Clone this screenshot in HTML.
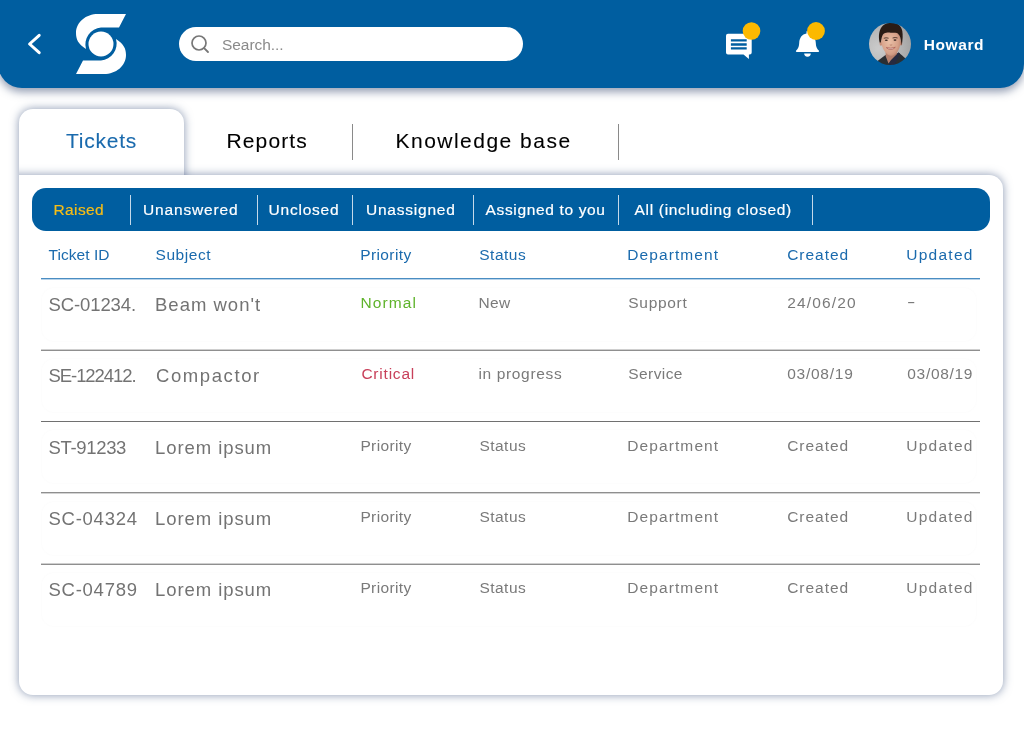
<!DOCTYPE html>
<html lang="en">
<head>
<meta charset="utf-8">
<title>Tickets</title>
<style>
*{box-sizing:border-box;margin:0;padding:0}
html,body{width:1024px;height:730px;overflow:hidden;background:#fff}
body{font-family:"Liberation Sans",sans-serif;position:relative;color:#6b6b6b}
.abs{position:absolute;white-space:nowrap}
#tx{position:absolute;left:0;top:0;width:1024px;height:730px;will-change:transform}
div.abs{line-height:1em}
#hdr{position:absolute;left:-2px;top:-10px;width:1026px;height:98px;background:#005ea0;border-radius:0 0 24px 24px;box-shadow:0 4px 9px rgba(43,63,105,.5)}
#search{position:absolute;left:179px;top:27px;width:344px;height:34px;border-radius:17px;background:#fff}
.srch{font-size:15.5px;color:#8a8a8a}
.user{color:#fff;font-weight:bold;font-size:15.5px}
#tab{position:absolute;left:19px;top:108.500px;width:165px;height:400px;background:#fff;border-radius:14px 14px 0 0;box-shadow:0 0 10px rgba(58,82,125,.6);clip-path:polygon(-20px -20px,185px -20px,185px 66.500px,0 66.500px,0 121.500px,-20px 121.500px)}
#panelA{position:absolute;left:-30px;top:175px;width:1033px;height:520px;background:#fff;border-radius:0 14px 14px 0;box-shadow:0 0 10px rgba(58,82,125,.6);clip-path:polygon(49px -20px,1053.500px -20px,1053.500px 55px,49px 55px)}
#panelB{position:absolute;left:19px;top:175px;width:984px;height:519.500px;background:#fff;border-radius:0 14px 14px 14px;box-shadow:0 0 10px rgba(58,82,125,.6);clip-path:polygon(-20px 55px,1004.500px 55px,1004.500px 540px,-20px 540px)}
.tabt{font-size:21px;color:#000;-webkit-text-stroke:.1px currentColor}
.vdiv{position:absolute;width:1px;background:#8a8a8a;top:124px;height:36px}
#fbar{position:absolute;left:32px;top:188px;width:958px;height:43px;border-radius:14px;background:#005ea0}
.f{color:#fff;font-size:15.5px;-webkit-text-stroke:.2px currentColor}
.fd{position:absolute;width:1px;background:#c5d9ea;top:194.500px;height:30px}
.th{color:#1a6aad;font-size:15.5px}
.hl{position:absolute;left:41px;width:939px;height:2px}
.big{font-size:18.5px;color:#737373}
.sm{font-size:15.5px;color:#7a7a7a}
.rb{position:absolute;left:42px;width:934px;height:53px;border-radius:12px;box-shadow:0 0 3px rgba(0,0,0,.028)}
</style>
</head>
<body>
<div id="hdr"></div>
<svg class="abs" style="left:24px;top:30px" width="22" height="28" viewBox="0 0 22 28"><path d="M15.200 5.300 L5.600 14 L15.200 22.700" fill="none" stroke="#fff" stroke-width="3" stroke-linecap="round" stroke-linejoin="round"/></svg>
<svg id="logo" class="abs" style="left:70px;top:10px" width="64" height="68" viewBox="70 10 64 68">
<path d="M126 14 L119 27.500 L101 27.500 A17 17 0 0 0 86 49 C78 44 76 39 76 33 C76 22 86 14 98 14 Z" fill="#fff"/>
<path d="M76 74 L83 60.500 L101 60.500 A17 17 0 0 0 116 39 C124 44 126 49 126 55 C126 66 116 74 104 74 Z" fill="#fff"/>
<circle cx="101" cy="44" r="12.500" fill="#fff"/>
</svg>
<div id="search">
<svg style="position:absolute;left:10px;top:7px" width="22" height="22" viewBox="0 0 22 22"><circle cx="10" cy="9" r="7" fill="none" stroke="#777" stroke-width="1.700"/><path d="M15.100 14.100 L19 18" stroke="#777" stroke-width="1.800" stroke-linecap="round"/></svg>
</div>
<svg class="abs" style="left:720px;top:18px" width="110" height="46" viewBox="720 18 110 46">
<path d="M728 33.800 H749.700 A2 2 0 0 1 751.700 35.800 V52.500 A2 2 0 0 1 749.700 54.500 H748.900 V59 L743.500 54.500 H728 A2 2 0 0 1 726 52.500 V35.800 A2 2 0 0 1 728 33.800 Z" fill="#fff"/>
<path d="M730.900 40.400 H746.700 M730.900 44.450 H746.700 M730.900 48.400 H746.700" stroke="#005ea0" stroke-width="2.400"/>
<circle cx="751.500" cy="31" r="8.800" fill="#fcb900"/>
<path d="M806.500 31.200 H808.500 V33.600 C813 34.300 815.600 38 815.800 43 C816 47.500 817.500 49.300 818.800 50.600 C819.400 51.200 819.100 52.100 818.200 52.100 H796.800 C795.900 52.100 795.600 51.200 796.200 50.600 C797.500 49.300 799 47.500 799.200 43 C799.400 38 802 34.300 806.500 33.600 Z" fill="#fff"/>
<path d="M804.200 53.600 H810.800 A3.300 3.100 0 0 1 804.200 53.600 Z" fill="#fff"/>
<circle cx="816" cy="31" r="8.900" fill="#fcb900"/>
</svg>
<svg class="abs" style="left:869px;top:23px" width="42" height="42" viewBox="0 0 42 42">
<defs><clipPath id="av"><circle cx="21" cy="21" r="21"/></clipPath>
<radialGradient id="abg" cx="0.25" cy="0.6" r="0.9"><stop offset="0" stop-color="#cbcbcb"/><stop offset="0.55" stop-color="#b4b4b4"/><stop offset="1" stop-color="#969696"/></radialGradient>
<radialGradient id="afc" cx="0.42" cy="0.45" r="0.65"><stop offset="0" stop-color="#e9bfa6"/><stop offset="0.7" stop-color="#d6a088"/><stop offset="1" stop-color="#b98470"/></radialGradient>
<filter id="abl" x="-10%" y="-10%" width="120%" height="120%"><feGaussianBlur stdDeviation="0.45"/></filter>
</defs>
<g clip-path="url(#av)"><g filter="url(#abl)">
<rect x="-2" y="-2" width="46" height="46" fill="url(#abg)"/>
<path d="M7 42 L8.500 38 C11 36 14 34 16.500 32 L22 36 L29.500 29.500 C32 31.500 34.500 33.500 36.500 35.500 L39 42 Z" fill="#2c2e33"/>
<path d="M16 32.500 L20.500 42 L26 42 L31 30.500 L29.500 29.500 L23 35 Z" fill="#252c3f"/>
<path d="M16.800 27 L16.600 33 L19.500 40.500 L22 37 L28 31 L28.500 25 Z" fill="#b57f6c"/>
<ellipse cx="11.900" cy="20.200" rx="1.300" ry="2.500" fill="#c58d78"/>
<ellipse cx="32" cy="20" rx="1.300" ry="2.600" fill="#b9806c"/>
<path d="M12.300 17 C12.300 10 16 7.500 22 7.500 C28.500 7.500 31.700 10.500 31.600 17.500 C31.500 23 30 27.500 27 30.500 C25 32.500 23 33 21.500 32.800 C19.500 32.500 17.500 31 15.800 28.500 C13.500 25.500 12.300 21.500 12.300 17 Z" fill="url(#afc)"/>
<path d="M10.600 19.500 C9.200 13 10 6 14 2.500 C17 0 21 -0.500 25 0 C29.500 0.600 32.500 3.500 33.300 8 C34 12 33.800 17 32.600 22.500 C32.300 20 32 17 31.300 14.500 C30.800 12.500 29.500 11 28 10 C25 9.300 22 10 19.500 9.600 C17.500 9.300 15.500 10 14 11.500 C12.800 13 12.500 16 11.800 19.500 Z" fill="#2a1d18"/>
<path d="M14.800 15.300 Q17 14.300 19.600 15.200" stroke="#4a3228" stroke-width="0.900" fill="none"/>
<path d="M23.600 15 Q26.300 14 28.600 15" stroke="#4a3228" stroke-width="0.900" fill="none"/>
<ellipse cx="17.300" cy="17.300" rx="1.500" ry="0.800" fill="#3b2a25"/>
<ellipse cx="26" cy="17.100" rx="1.500" ry="0.800" fill="#3b2a25"/>
<path d="M20.800 21.800 Q21.800 22.600 23.200 21.800" stroke="#b47a66" stroke-width="0.800" fill="none"/>
<path d="M17.300 24.600 Q21.800 26 26.300 24.300 Q22 28.600 17.300 24.600 Z" fill="#f3e6e1" stroke="#a8574f" stroke-width="0.700"/>
</g></g>
</svg>

<div id="tab"></div>
<div id="panelA"></div>
<div id="panelB"></div>
<div class="vdiv" style="left:352px"></div>
<div class="vdiv" style="left:617.500px"></div>

<div id="fbar"></div>
<div class="fd" style="left:130px"></div>
<div class="fd" style="left:256.500px"></div>
<div class="fd" style="left:352px"></div>
<div class="fd" style="left:473px"></div>
<div class="fd" style="left:617.500px"></div>
<div class="fd" style="left:811.500px"></div>

<div class="hl" style="top:278px;background:linear-gradient(#4a8dc2 50%,#b8d3ea 50%)"></div>
<div class="hl" style="top:349px;background:linear-gradient(#cfcfcf 50%,#8f8f8f 50%)"></div>
<div class="hl" style="top:421px;height:1px;background:#707070"></div>
<div class="hl" style="top:492px;background:linear-gradient(#8f8f8f 50%,#d3d3d3 50%)"></div>
<div class="hl" style="top:563px;background:linear-gradient(#cfcfcf 50%,#8f8f8f 50%)"></div>
<div class="rb" style="top:288px"></div>
<div class="rb" style="top:359px"></div>
<div class="rb" style="top:430px"></div>
<div class="rb" style="top:502px"></div>
<div class="rb" style="top:573px"></div>

<div id="tx">
<div class="abs tabt" style="left:65.90px;top:130.00px;letter-spacing:0.779px;color:#1a6aad">Tickets</div>
<div class="abs tabt" style="left:226.50px;top:130.00px;letter-spacing:1.120px;">Reports</div>
<div class="abs tabt" style="left:395.50px;top:130.00px;letter-spacing:1.484px;">Knowledge base</div>
<div class="abs f" style="left:53.50px;top:202.00px;letter-spacing:0.374px;color:#f6bd16">Raised</div>
<div class="abs f" style="left:143.00px;top:202.00px;letter-spacing:0.844px;">Unanswered</div>
<div class="abs f" style="left:268.50px;top:202.00px;letter-spacing:0.786px;">Unclosed</div>
<div class="abs f" style="left:366.00px;top:202.00px;letter-spacing:0.779px;">Unassigned</div>
<div class="abs f" style="left:485.50px;top:202.00px;letter-spacing:0.652px;">Assigned to you</div>
<div class="abs f" style="left:634.50px;top:202.00px;letter-spacing:0.691px;">All (including closed)</div>
<div class="abs th" style="left:48.50px;top:247.00px;letter-spacing:0.053px;">Ticket ID</div>
<div class="abs th" style="left:155.50px;top:247.00px;letter-spacing:0.568px;">Subject</div>
<div class="abs th" style="left:360.20px;top:247.00px;letter-spacing:0.403px;">Priority</div>
<div class="abs th" style="left:479.20px;top:247.00px;letter-spacing:0.522px;">Status</div>
<div class="abs th" style="left:627.20px;top:247.00px;letter-spacing:1.103px;">Department</div>
<div class="abs th" style="left:787.20px;top:247.00px;letter-spacing:0.980px;">Created</div>
<div class="abs th" style="left:906.20px;top:247.00px;letter-spacing:1.270px;">Updated</div>
<div class="abs big" style="left:48.50px;top:296.00px;letter-spacing:-0.101px;">SC-01234.</div>
<div class="abs big" style="left:155.00px;top:296.00px;letter-spacing:1.007px;">Beam won't</div>
<div class="abs sm" style="left:360.40px;top:295.00px;letter-spacing:1.138px;color:#5fb32b">Normal</div>
<div class="abs sm" style="left:478.40px;top:295.00px;letter-spacing:0.343px;">New</div>
<div class="abs sm" style="left:628.30px;top:295.00px;letter-spacing:0.686px;">Support</div>
<div class="abs sm" style="left:787.20px;top:295.00px;letter-spacing:1.141px;">24/06/20</div>
<div class="abs sm" style="left:907.30px;top:295.00px;letter-spacing:0.000px;transform:scaleX(1.62);transform-origin:0 50%;margin-top:-1px">-</div>
<div class="abs big" style="left:48.50px;top:367.00px;letter-spacing:-1.064px;">SE-122412.</div>
<div class="abs big" style="left:156.00px;top:367.00px;letter-spacing:1.586px;">Compactor</div>
<div class="abs sm" style="left:361.40px;top:366.00px;letter-spacing:0.783px;color:#c8405a">Critical</div>
<div class="abs sm" style="left:478.40px;top:366.00px;letter-spacing:0.657px;">in progress</div>
<div class="abs sm" style="left:628.30px;top:366.00px;letter-spacing:0.406px;">Service</div>
<div class="abs sm" style="left:787.20px;top:366.00px;letter-spacing:0.755px;">03/08/19</div>
<div class="abs sm" style="left:907.30px;top:366.00px;letter-spacing:0.684px;">03/08/19</div>
<div class="abs big" style="left:48.50px;top:439.00px;letter-spacing:-0.334px;">ST-91233</div>
<div class="abs big" style="left:155.00px;top:439.00px;letter-spacing:0.928px;">Lorem ipsum</div>
<div class="abs sm" style="left:360.40px;top:438.00px;letter-spacing:0.375px;">Priority</div>
<div class="abs sm" style="left:479.40px;top:438.00px;letter-spacing:0.482px;">Status</div>
<div class="abs sm" style="left:627.30px;top:438.00px;letter-spacing:1.092px;">Department</div>
<div class="abs sm" style="left:787.20px;top:438.00px;letter-spacing:0.980px;">Created</div>
<div class="abs sm" style="left:906.30px;top:438.00px;letter-spacing:1.253px;">Updated</div>
<div class="abs big" style="left:48.50px;top:510.00px;letter-spacing:0.741px;">SC-04324</div>
<div class="abs big" style="left:155.00px;top:510.00px;letter-spacing:0.928px;">Lorem ipsum</div>
<div class="abs sm" style="left:360.40px;top:509.00px;letter-spacing:0.375px;">Priority</div>
<div class="abs sm" style="left:479.40px;top:509.00px;letter-spacing:0.482px;">Status</div>
<div class="abs sm" style="left:627.30px;top:509.00px;letter-spacing:1.092px;">Department</div>
<div class="abs sm" style="left:787.20px;top:509.00px;letter-spacing:0.980px;">Created</div>
<div class="abs sm" style="left:906.30px;top:509.00px;letter-spacing:1.253px;">Updated</div>
<div class="abs big" style="left:48.50px;top:581.00px;letter-spacing:0.741px;">SC-04789</div>
<div class="abs big" style="left:155.00px;top:581.00px;letter-spacing:0.928px;">Lorem ipsum</div>
<div class="abs sm" style="left:360.40px;top:580.00px;letter-spacing:0.375px;">Priority</div>
<div class="abs sm" style="left:479.40px;top:580.00px;letter-spacing:0.482px;">Status</div>
<div class="abs sm" style="left:627.30px;top:580.00px;letter-spacing:1.092px;">Department</div>
<div class="abs sm" style="left:787.20px;top:580.00px;letter-spacing:0.980px;">Created</div>
<div class="abs sm" style="left:906.30px;top:580.00px;letter-spacing:1.253px;">Updated</div>
<div class="abs user" style="left:923.80px;top:37.00px;letter-spacing:0.566px;">Howard</div>
<div class="abs srch" style="left:222.00px;top:37.00px;letter-spacing:-0.053px;">Search...</div>
</div>
</body>
</html>
